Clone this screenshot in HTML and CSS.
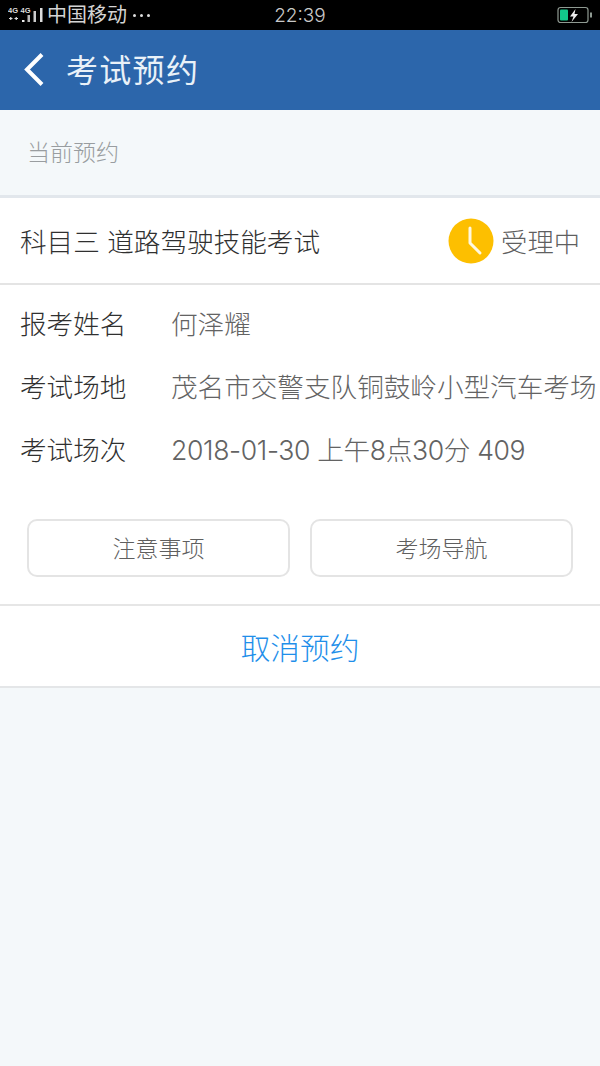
FILE: index.html
```html
<!DOCTYPE html>
<html lang="zh-CN">
<head>
<meta charset="utf-8">
<title>考试预约</title>
<link rel="stylesheet" href="styles.css">
</head>
<body>
<div class="status">
  <div class="status-left">
    <svg class="signal" width="36" height="20" viewBox="0 0 36 20">
      <text x="0" y="8" class="net">4G</text>
      <text x="12.500" y="8" class="net">4G</text>
      <path d="M1 13.500h3.500M2.750 12v3M6.500 13.500h3.500M8.250 12v3" stroke="#ddd" stroke-width="1.200" fill="none"/>
      <rect x="14" y="15" width="2.500" height="2" fill="#eee"/>
      <rect x="19.500" y="10" width="2.500" height="7" fill="#bbb"/>
      <rect x="25.500" y="6" width="2.500" height="11" fill="#ccc"/>
      <rect x="32" y="3" width="2.500" height="14" fill="#ddd"/>
    </svg>
    <span class="carrier">中国移动</span>
    <span class="dots"><i></i><i></i><i></i></span>
  </div>
  <div class="clock">22:39</div>
  <div class="status-right">
    <svg width="36" height="18" viewBox="0 0 36 18">
      <rect x="1" y="1.500" width="30" height="15" rx="2.500" fill="none" stroke="#8f9a92" stroke-width="1.200"/>
      <rect x="3" y="3.500" width="8" height="11" rx="1" fill="#12c98a"/>
      <path d="M18.500 3L13 10.500h3.500L14.500 16 21 8h-3.500z" fill="#eee"/>
      <rect x="33" y="6.500" width="2" height="5" fill="#8f9a92"/>
    </svg>
  </div>
</div>
<header class="nav">
  <svg class="back" width="22" height="34" viewBox="0 0 22 34"><path d="M19 1.500L4 16.500l15 15" fill="none" stroke="#fff" stroke-width="4"/></svg>
  <h1>考试预约</h1>
</header>
<div class="section-label">当前预约</div>
<main class="card">
  <div class="card-head">
    <span class="subject">科目三 道路驾驶技能考试</span>
    <span class="state">
      <svg width="46" height="46" viewBox="0 0 46 46">
        <circle cx="23" cy="23" r="22.500" fill="#fdbf00"/>
        <path d="M22 10v15l10 10" fill="none" stroke="#fff8e0" stroke-width="3" stroke-linecap="round" stroke-linejoin="round"/>
      </svg>
      <span>受理中</span>
    </span>
  </div>
  <dl class="rows">
    <div class="row"><dt>报考姓名</dt><dd>何泽耀</dd></div>
    <div class="row"><dt>考试场地</dt><dd>茂名市交警支队铜鼓岭小型汽车考场</dd></div>
    <div class="row"><dt>考试场次</dt><dd class="tight">2018-01-30 上午8点30分 409</dd></div>
  </dl>
  <div class="actions">
    <button class="btn">注意事项</button>
    <button class="btn">考场导航</button>
  </div>
  <div class="cancel">取消预约</div>
</main>
</body>
</html>
```
FILE: styles.css
```css
* { box-sizing: border-box; }
html, body { margin: 0; padding: 0; }
body {
  width: 600px;
  height: 1066px;
  overflow: hidden;
  background: #f4f8fa;
  font-family: "Inter", "Noto Sans CJK SC", sans-serif;
  font-weight: 300;
}
.status {
  height: 30px;
  background: #000;
  display: grid;
  grid-template-columns: 1fr auto 1fr;
  align-items: center;
  color: #d8d8d8;
}
.status-left { display: flex; align-items: center; padding-left: 8px; }
.signal { display: block; margin-right: 3px; }
.net { font: bold 7.500px "Liberation Sans", sans-serif; fill: #ddd; }
.carrier { font-size: 20px; line-height: 30px; color: #d4d4d4; font-weight: 400; }
.dots { display: flex; gap: 4px; margin-left: 6px; }
.dots i { width: 3px; height: 3px; border-radius: 50%; background: #ddd; }
.clock { font-size: 19px; color: #c9c9c9; }
.status-right { display: flex; justify-content: flex-end; padding-right: 7px; }
.nav {
  height: 80px;
  background: #2c66ab;
  display: flex;
  align-items: center;
  padding-left: 23px;
}
.back { display: block; }
.nav h1 {
  margin: 0 0 0 21px;
  padding-bottom: 4px;
  font-size: 32px;
  font-weight: 400;
  color: #e9f1f8;
  letter-spacing: 1.300px;
}
.section-label {
  height: 85px;
  padding: 0 0 3px 27px;
  display: flex;
  align-items: center;
  font-size: 23px;
  color: #999da0;
}
.card {
  background: #fff;
  border-top: 3px solid #e2e7ec;
  border-bottom: 2px solid #e4e6e8;
}
.card-head {
  height: 87px;
  display: flex;
  align-items: center;
  justify-content: space-between;
  padding: 0 20px;
  border-bottom: 2px solid #e4e4e4;
}
.subject { font-size: 26.600px; color: #303030; }
.state { display: flex; align-items: center; gap: 7px; font-size: 26.300px; color: #5f5f5f; }
.state svg { display: block; }
.rows { margin: 0; padding: 6px 0 0 20px; }
.row { display: flex; height: 63px; align-items: center; white-space: nowrap; }
.row dt { width: 151px; font-size: 26.600px; color: #303030; }
.row dd { margin: 0; font-size: 26.600px; color: #636363; }
.row dd.tight { letter-spacing: -0.350px; }
.actions {
  display: flex;
  gap: 20px;
  padding: 39px 27px 27px;
  border-bottom: 2px solid #e6e6e6;
}
.btn {
  flex: 1;
  height: 58px;
  background: #fff;
  border: 2px solid #e4e4e4;
  border-radius: 10px;
  font: inherit;
  font-size: 23px;
  color: #5f5f5f;
  padding: 0 0 3px;
}
.cancel {
  height: 80px;
  display: flex;
  align-items: center;
  justify-content: center;
  font-size: 29.700px;
  color: #1f8fea;
}
```
